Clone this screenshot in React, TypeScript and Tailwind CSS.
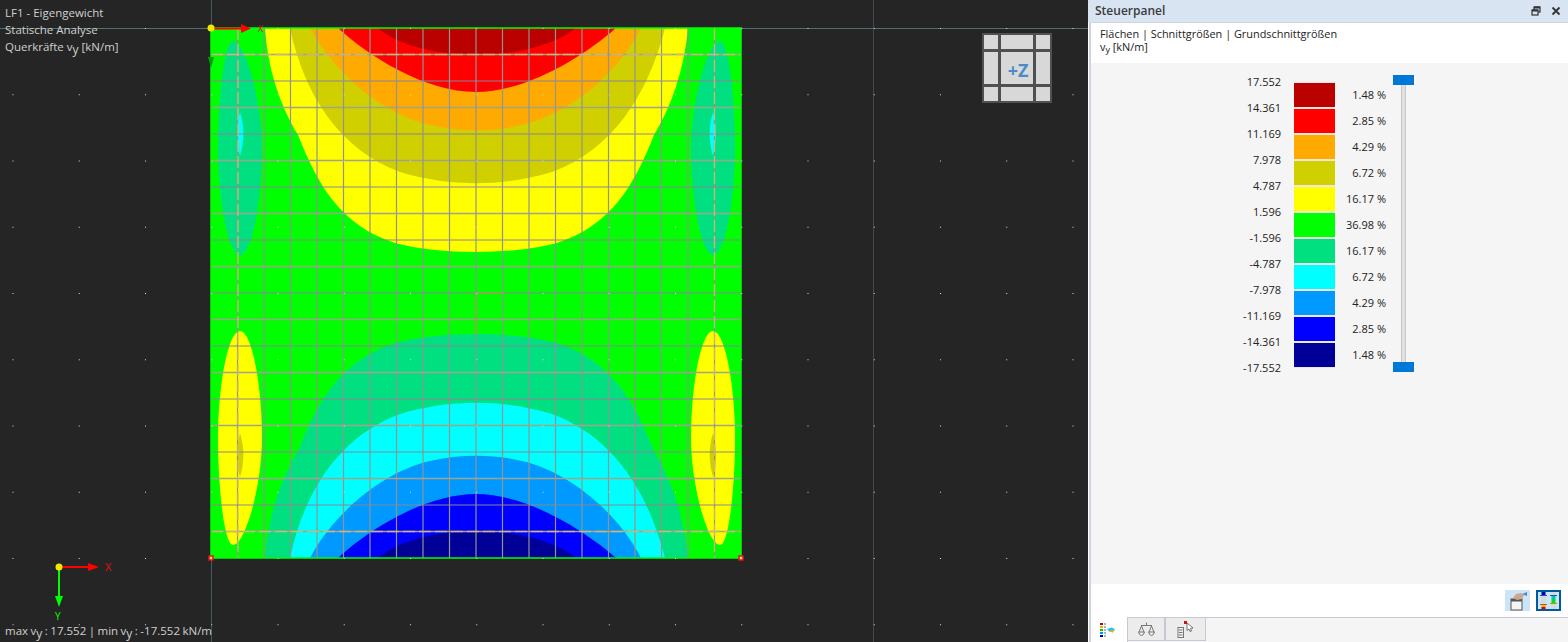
const font = { fontFamily: '"Open Sans", sans-serif' }

const legendValues = ["17.552", "14.361", "11.169", "7.978", "4.787", "1.596", "-1.596", "-4.787", "-7.978", "-11.169", "-14.361", "-17.552"]
const legendRows = [
  { color: "bg-[#bb0000]", pct: "1.48 %" },
  { color: "bg-[#ff0000]", pct: "2.85 %" },
  { color: "bg-[#ffaa00]", pct: "4.29 %" },
  { color: "bg-[#d0d000]", pct: "6.72 %" },
  { color: "bg-[#ffff00]", pct: "16.17 %" },
  { color: "bg-[#00ff00]", pct: "36.98 %" },
  { color: "bg-[#00e080]", pct: "16.17 %" },
  { color: "bg-[#00ffff]", pct: "6.72 %" },
  { color: "bg-[#0099ff]", pct: "4.29 %" },
  { color: "bg-[#0000ff]", pct: "2.85 %" },
  { color: "bg-[#000099]", pct: "1.48 %" },
]

// contour bands of the upper half, mirrored around y=293 for the lower half
const bands = [
  { d: "M265 28 C268 70 280 105 298 135 C318 185 340 225 395 243 C440 255 512 255 557 243 C612 225 634 185 654 135 C672 105 684 70 688 28 Z", top: "#ffff00", bottom: "#00e080" },
  { d: "M290 28 C304 95 340 150 400 172 C450 187 502 187 552 172 C612 150 648 95 665 28 Z", top: "#d0d000", bottom: "#00ffff" },
  { d: "M310 28 C335 75 385 115 430 125 C460 132 492 132 522 125 C567 115 617 75 641 28 Z", top: "#ffaa00", bottom: "#0099ff" },
  { d: "M338 28 C368 56 425 92 476 92 C527 92 584 56 616 28 Z", top: "#ff0000", bottom: "#0000ff" },
  { d: "M378 28 C398 46 440 55 476 55 C512 55 554 46 576 28 Z", top: "#bb0000", bottom: "#000099" },
]

const bigLobe = "M233 41 C224 41 218 100 218 148 C218 200 228 255 240 255 C252 255 262 200 262 148 C262 100 245 41 233 41 Z"
const smallLobe = "M240 112 C236 125 236 140 240 156 C245 140 244 125 240 112 Z"

const gridStops = Array.from({ length: 19 }, (_, i) => i + 1)
const dotsX = Array.from({ length: 17 }, (_, i) => 12.5 + i * 66.25)
const dotsY = Array.from({ length: 10 }, (_, i) => 28 + i * 66.25)

function Plot() {
  return (
    <svg className="absolute inset-0" width="1088" height="642" viewBox="0 0 1088 642">
      <line x1="0" y1="28.5" x2="1088" y2="28.5" stroke="#4a7474" />
      <line x1="211.5" y1="0" x2="211.5" y2="642" stroke="#46595c" />
      <line x1="873.5" y1="0" x2="873.5" y2="642" stroke="#444a4c" />

      <rect x="211" y="28" width="530" height="530" fill="#00ff00" />
      <g>
        {bands.map((b) => <path key={b.top} d={b.d} fill={b.top} />)}
        {bands.map((b) => <path key={b.bottom} d={b.d} fill={b.bottom} transform="matrix(1 0 0 -1 0 586)" />)}
      </g>
      {["", "matrix(-1 0 0 1 953 0)"].map((t) => (
        <g key={t} transform={t}>
          <path d={bigLobe} fill="#00e080" />
          <path d={smallLobe} fill="#00ffff" />
          <g transform="matrix(1 0 0 -1 0 586)">
            <path d={bigLobe} fill="#ffff00" />
            <path d={smallLobe} fill="#d0d000" transform="translate(0 -3)" />
          </g>
        </g>
      ))}

      {gridStops.map((n) => (
        <g key={n}>
          <line x1={211 + n * 26.5} y1="28" x2={211 + n * 26.5} y2="558" stroke="#939393" strokeWidth="1.2" />
          {n % 2 === 1
            ? <line x1="211" y1={28 + n * 26.5} x2="741" y2={28 + n * 26.5} stroke="#a0a48c" strokeWidth="1.4" />
            : <line x1="211" y1={28 + n * 26.5} x2="741" y2={28 + n * 26.5} stroke="#8c8496" strokeWidth="1" />}
        </g>
      ))}
      <g stroke="#d8b878" strokeWidth="1.4" strokeDasharray="12 4" strokeOpacity="0.85">
        <line x1="211" y1="54.5" x2="741" y2="54.5" />
        <line x1="211" y1="531.5" x2="741" y2="531.5" />
        <line x1="238" y1="28" x2="238" y2="558" />
        <line x1="714.5" y1="28" x2="714.5" y2="558" />
      </g>
      <rect x="211" y="28" width="530" height="530" fill="none" stroke="#00ff00" strokeWidth="1.5" />

      {/* faded center axes */}
      <g stroke="#a0a050" strokeWidth="1.5">
        <line x1="476" y1="293" x2="504" y2="293" />
        <line x1="476" y1="293" x2="476" y2="335" />
      </g>

      {dotsX.map((x) => dotsY.map((y) => <rect key={`${x}-${y}`} x={x} y={y} width="1" height="1" fill="#e0d8e0" />))}

      {/* corner nodes */}
      {[[211, 558], [741, 558]].map(([x, y]) => (
        <rect key={`${x}${y}`} x={x - 2} y={y - 2} width="4" height="4" fill="#ffd0a0" stroke="#e81010" strokeWidth="1.5" />
      ))}

      {/* origin axes on the plate */}
      <line x1="212" y1="28.5" x2="243" y2="28.5" stroke="#ff0000" strokeWidth="2" />
      <path d="M241 24 L251 28.5 L241 33 Z" fill="#ff0000" />
      <path d="M208 57 L214 57 L211 68 Z" fill="#00a000" />
      <circle cx="211" cy="28" r="3.5" fill="#f2e800" />

      {/* coordinate system bottom left */}
      <line x1="60" y1="567" x2="90" y2="567" stroke="#ff0000" strokeWidth="2" />
      <path d="M88 563 L99 567 L88 571 Z" fill="#ff0000" />
      <line x1="59" y1="567" x2="59" y2="598" stroke="#00ff00" strokeWidth="2" />
      <path d="M55 596 L59 607 L63 596 Z" fill="#00ff00" />
      <circle cx="59" cy="567" r="3.5" fill="#f2e800" />
    </svg>
  )
}

function NavCube() {
  const cell = "bg-[#d8d8d8]"
  return (
    <div className="absolute left-[982px] top-[33px] grid h-[70px] w-[70px] grid-cols-[14px_1fr_14px] grid-rows-[14px_1fr_14px] gap-[3px] bg-[#505050] p-[2px]">
      <div className={cell} />
      <div className={cell} />
      <div className={cell} />
      <div className={cell} />
      <div className={`${cell} flex items-center justify-center pl-[2px] pt-[4px] text-[18px] font-bold leading-none text-[#4a8bc8]`}>+Z</div>
      <div className={cell} />
      <div className={cell} />
      <div className={cell} />
      <div className={cell} />
    </div>
  )
}

function Viewport() {
  return (
    <div className="relative h-full w-[1088px] shrink-0 overflow-hidden bg-[#252525] text-[11.5px] text-[#d0d0d0]">
      <Plot />
      <div className="absolute left-[5px] top-[4px] leading-[17px]">
        <div>LF1 - Eigengewicht</div>
        <div>Statische Analyse</div>
        <div>Querkräfte v<sub className="text-[12px] leading-none">y</sub> [kN/m]</div>
      </div>
      <span className="absolute left-[258px] top-[24px] text-[9px] leading-none text-[#ff0000]">X</span>
      <span className="absolute left-[105px] top-[561px] text-[11px] leading-none text-[#e01010]">X</span>
      <span className="absolute left-[55px] top-[611px] text-[10px] leading-none text-[#00ff00]">Y</span>
      <NavCube />
      <div className="absolute left-[5px] top-[622px] whitespace-nowrap leading-[17px] [word-spacing:-0.5px]">
        max v<sub className="text-[12px] leading-none">y</sub> : 17.552 | min v<sub className="text-[12px] leading-none">y</sub> : -17.552 kN/m
      </div>
    </div>
  )
}

function Legend() {
  return (
    <div className="flex pl-[130px] pt-[12px] text-[11px] text-[#222]">
      <div className="flex w-[60px] flex-col items-end">
        {legendValues.map((v) => <div key={v} className="h-[26px] leading-[14px]">{v}</div>)}
      </div>
      <div className="ml-[13px] mt-[7px] flex w-[41px] flex-col">
        {legendRows.map((r, i) => (
          <div key={i} className={`h-[26px] border-y border-y-[#f0e8e0] ${r.color}`} />
        ))}
      </div>
      <div className="ml-[6px] mt-[13px] flex w-[45px] flex-col items-end">
        {legendRows.map((r, i) => <div key={i} className="h-[26px] leading-[14px]">{r.pct}</div>)}
      </div>
      <div className="relative ml-[7px] h-[297px] w-[21px]">
        <div className="absolute left-[8px] top-[5px] h-[287px] w-[5px] border-x border-x-[#c8c8c8] bg-[#e0e0e0]" />
        <div className="absolute left-0 top-0 h-[10px] w-[21px] bg-[#0078d7]" />
        <div className="absolute bottom-0 left-0 h-[10px] w-[21px] bg-[#0078d7]" />
      </div>
    </div>
  )
}

function ToolIcons() {
  return (
    <div className="flex h-[33px] shrink-0 items-center justify-end gap-[6px] bg-white pr-[7px]">
      <div className="flex h-[21px] w-[25px] items-center justify-center bg-[#cce4f7]">
        <svg width="20" height="20" viewBox="0 0 20 20">
          <rect x="3" y="8" width="11" height="11" fill="#f4f4f4" stroke="#555" />
          <rect x="3" y="8" width="11" height="2.5" fill="#555" />
          <path d="M5 7 L8 3 L13 2 L16 4 L14 8 L9 9 Z" fill="#c9a88e" />
          <path d="M14 3 L19 1 L19 5 Z" fill="#4a88c8" />
        </svg>
      </div>
      <div className="flex h-[21px] w-[25px] items-center justify-center border-2 border-[#005a9e] bg-[#cce4f7]">
        <svg width="19" height="17" viewBox="0 0 19 17">
          <rect x="2" y="0" width="5" height="17" fill="#d8d8d8" />
          <rect x="12" y="0" width="5" height="17" fill="#d8d8d8" />
          <rect x="2.5" y="0" width="4" height="3" fill="#0000c0" />
          <rect x="1" y="3" width="7" height="1" fill="#1060b0" />
          <rect x="1" y="12" width="7" height="1" fill="#907030" />
          <rect x="2.5" y="13" width="4" height="2" fill="#ffaa00" />
          <rect x="2.5" y="15" width="4" height="2" fill="#e00000" />
          <rect x="11" y="3" width="7" height="1" fill="#1060b0" />
          <rect x="12.5" y="4" width="4" height="3" fill="#00c0e0" />
          <rect x="12.5" y="7" width="4" height="4" fill="#00e020" />
          <rect x="11" y="11" width="7" height="1" fill="#a0a000" />
        </svg>
      </div>
    </div>
  )
}

function Tabs() {
  return (
    <div className="flex h-[25px] shrink-0 items-start border-t border-t-[#c8c8d4] bg-[#f5f5f5]">
      <div className="-mt-px flex h-[25px] w-[37px] items-center justify-center border-r border-r-[#c8c8d4] bg-white pr-[4px]">
        <svg width="16" height="16" viewBox="0 0 16 16">
          {["#bb0000", "#ffaa00", "#00d000", "#0099ff", "#000099"].map((c, i) => (
            <g key={c}>
              <rect x="1" y={1 + i * 3} width="3" height="2" fill={c} />
              <rect x="5" y={1.5 + i * 3} width="2" height="1" fill="#666" />
            </g>
          ))}
          <path d="M8 7 L13 5.5 L16 7.5 L14 10 L10 9.5 Z" fill="#20c0f0" />
          <path d="M11 8 L15 7.5 L13.5 11 Z" fill="#f0b000" />
        </svg>
      </div>
      <div className="flex h-[23px] w-[38px] items-center justify-center border-r-2 border-b border-[#c8c8d4] bg-[#ececec]">
        <svg width="17" height="15" viewBox="0 0 17 15" fill="none" stroke="#777">
          <path d="M8.5 0.5 V3 M3 3.5 H14 M3.5 4 L1 10 M3.5 4 L6 10 M13.5 4 L11 10 M13.5 4 L16 10" />
          <path d="M0.5 10 H6.5 Q5.5 13.5 3.5 13.5 Q1.5 13.5 0.5 10 Z M10.5 10 H16.5 Q15.5 13.5 13.5 13.5 Q11.5 13.5 10.5 10 Z" />
        </svg>
      </div>
      <div className="flex h-[23px] w-[40px] items-center justify-center border-r border-b border-[#c8c8d4] bg-[#ececec]">
        <svg width="18" height="17" viewBox="0 0 18 17" fill="none">
          <rect x="1" y="6.5" width="5.5" height="10" fill="#f0f0f0" stroke="#777" />
          <path d="M2 9 H5.5 M2 11.5 H5.5 M2 14 H5.5" stroke="#777" />
          <rect x="7" y="0" width="3" height="3" fill="#d01010" />
          <path d="M10 2 L16 7 L13.5 7.5 L14.5 10 L13 10.5 L12 8 L10 9.5 Z" fill="#fff" stroke="#555" strokeWidth="0.8" />
        </svg>
      </div>
      <div className="flex-1" />
    </div>
  )
}

function SidePanel() {
  return (
    <div className="flex h-full min-w-0 flex-1 flex-col bg-white">
      <div className="flex h-[22px] shrink-0 items-center justify-between bg-[#d8e4f2] pl-[7px] pr-[4px]">
        <span className="text-[12px] font-semibold text-[#3c3c3c]">Steuerpanel</span>
        <div className="flex items-center gap-[10px]">
          <svg width="10" height="10" viewBox="0 0 10 10" fill="none" stroke="#333" strokeWidth="1.2">
            <rect x="3" y="1" width="6" height="5" />
            <rect x="1" y="4" width="6" height="5" fill="#d8e4f2" />
            <path d="M1 4.5 H7 M3 1.5 H9" strokeWidth="2" />
          </svg>
          <svg className="mr-[3px]" width="10" height="10" viewBox="0 0 10 10" fill="none" stroke="#333" strokeWidth="1.8">
            <path d="M1.5 1.5 L8.5 8.5 M8.5 1.5 L1.5 8.5" />
          </svg>
        </div>
      </div>
      <div className="ml-px flex min-h-0 flex-1 flex-col border-l-2 border-t border-l-[#d0d4de] border-t-[#d0d4de]">
        <div className="h-[40px] shrink-0 pl-[9px] pt-[4px] text-[10.9px] leading-[13px] text-[#222]">
          <div>Flächen | Schnittgrößen | Grundschnittgrößen</div>
          <div>v<sub className="text-[9px] leading-none">y</sub> [kN/m]</div>
        </div>
        <div className="min-h-0 flex-1 bg-[#f5f5f5]">
          <Legend />
        </div>
        <ToolIcons />
        <Tabs />
      </div>
    </div>
  )
}

export default function App() {
  return (
    <div className="flex h-[642px] w-[1568px] overflow-hidden" style={font}>
      <Viewport />
      <SidePanel />
    </div>
  )
}
